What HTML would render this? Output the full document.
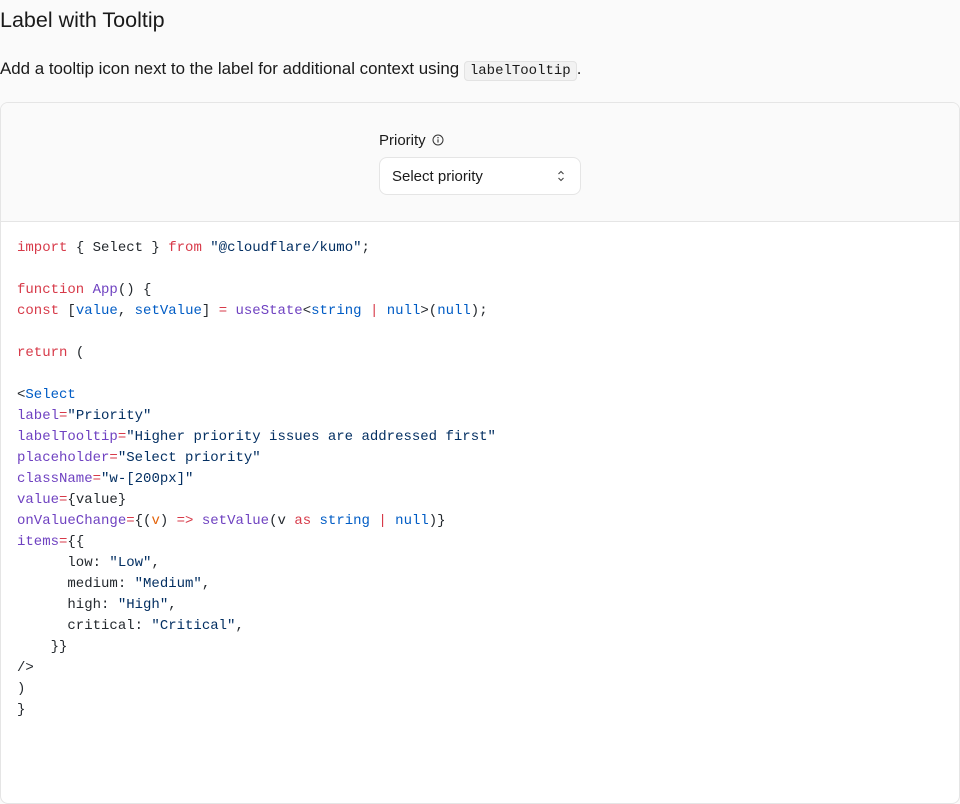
<!DOCTYPE html>
<html><head><style>
body{margin:0;background:#fafafa;font-family:"Liberation Sans",sans-serif;color:#1a1a1a;width:960px;height:732px;overflow:hidden;position:relative}
h2{position:absolute;left:0;top:6px;margin:0;font-size:21.5px;font-weight:400;line-height:28px}
p.d{position:absolute;left:0;top:58px;margin:0;font-size:16.9px;line-height:22px}
code.i{font-family:"Liberation Mono",monospace;font-size:14px;background:#f2f2f2;border:1px solid #e3e3e3;border-radius:4px;padding:1px 5px}
.card{position:absolute;left:0;top:102px;width:958px;height:700px;border:1px solid #e5e5e5;border-radius:8px;background:#fff;overflow:hidden}
.prev{height:118px;background:#fafafa;border-bottom:1px solid #e5e5e5;position:relative}
.lab{position:absolute;left:378px;top:29px;font-size:15px;line-height:18px}
.sel{position:absolute;left:378px;top:54px;width:202px;height:38px;border:1px solid #e5e5e5;border-radius:8px;background:#fff;box-sizing:border-box}
.sel span{position:absolute;left:12px;top:10px;font-size:15px;line-height:18px}
pre{margin:0;position:absolute;left:16px;top:135px;font-family:"Liberation Mono",monospace;font-size:14px;line-height:21px;color:#24292e}
.k{color:#d73a49}.f{color:#6f42c1}.b{color:#005cc5}.s{color:#032f62}.o{color:#e36209}
</style></head><body>
<h2>Label with Tooltip</h2>
<p class="d">Add a tooltip icon next to the label for additional context using <code class="i">labelTooltip</code>.</p>
<div class="card">
<div class="prev">
<div class="lab">Priority <svg width="12" height="12" viewBox="0 0 12 12" style="vertical-align:-1px;margin-left:2px"><circle cx="6" cy="6" r="5" fill="none" stroke="#333" stroke-width="1"/><path d="M6 5.3V8.6" stroke="#333" stroke-width="1.1"/><circle cx="6" cy="3.7" r=".7" fill="#333"/></svg></div>
<div class="sel"><span>Select priority</span><svg style="position:absolute;left:176px;top:11px" width="10" height="14" viewBox="0 0 10 14"><path d="M2.5 5 5 2.5 7.5 5M2.5 9 5 11.5 7.5 9" fill="none" stroke="#444" stroke-width="1.1"/></svg></div>
</div>
<pre><span class="k">import</span> { Select } <span class="k">from</span> <span class="s">"@cloudflare/kumo"</span>;

<span class="k">function</span> <span class="f">App</span>() {
<span class="k">const</span> [<span class="b">value</span>, <span class="b">setValue</span>] <span class="k">=</span> <span class="f">useState</span>&lt;<span class="b">string</span> <span class="k">|</span> <span class="b">null</span>&gt;(<span class="b">null</span>);

<span class="k">return</span> (

&lt;<span class="b">Select</span>
<span class="f">label</span><span class="k">=</span><span class="s">"Priority"</span>
<span class="f">labelTooltip</span><span class="k">=</span><span class="s">"Higher priority issues are addressed first"</span>
<span class="f">placeholder</span><span class="k">=</span><span class="s">"Select priority"</span>
<span class="f">className</span><span class="k">=</span><span class="s">"w-[200px]"</span>
<span class="f">value</span><span class="k">=</span>{value}
<span class="f">onValueChange</span><span class="k">=</span>{(<span class="o">v</span>) <span class="k">=&gt;</span> <span class="f">setValue</span>(v <span class="k">as</span> <span class="b">string</span> <span class="k">|</span> <span class="b">null</span>)}
<span class="f">items</span><span class="k">=</span>{{
      low: <span class="s">"Low"</span>,
      medium: <span class="s">"Medium"</span>,
      high: <span class="s">"High"</span>,
      critical: <span class="s">"Critical"</span>,
    }}
/&gt;
)
}</pre>
</div>
</body></html>
